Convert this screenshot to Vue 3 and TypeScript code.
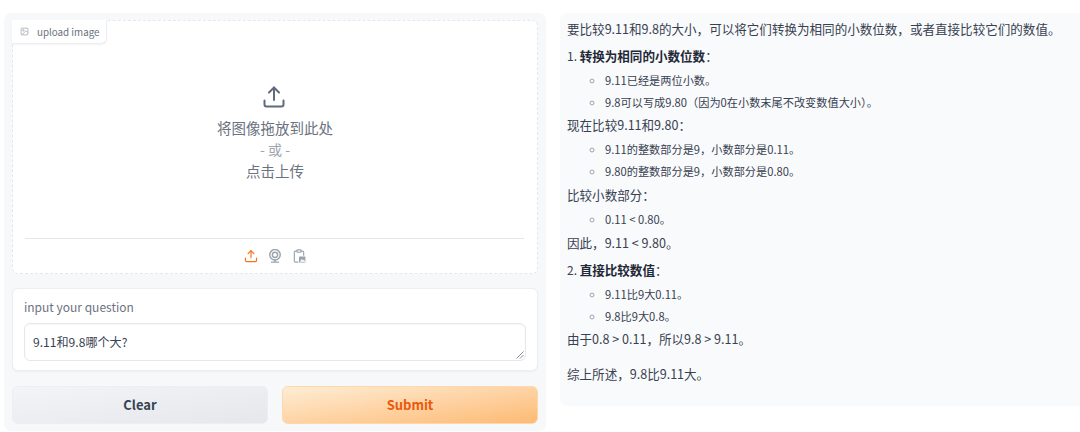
<script setup lang="ts">
const sections: { kind: string; text?: string; num?: string; strong?: string; tail?: string; items?: string[] }[] = [
  { kind: 'p', text: '要比较9.11和9.8的大小，可以将它们转换为相同的小数位数，或者直接比较它们的数值。' },
  { kind: 'h', num: '1. ', strong: '转换为相同的小数位数', tail: '：' },
  { kind: 'ul', items: ['9.11已经是两位小数。', '9.8可以写成9.80（因为0在小数末尾不改变数值大小）。'] },
  { kind: 'p', text: '现在比较9.11和9.80：' },
  { kind: 'ul', items: ['9.11的整数部分是9，小数部分是0.11。', '9.80的整数部分是9，小数部分是0.80。'] },
  { kind: 'p', text: '比较小数部分：' },
  { kind: 'ul', items: ['0.11 < 0.80。'] },
  { kind: 'p', text: '因此，9.11 < 9.80。' },
  { kind: 'h', num: '2. ', strong: '直接比较数值', tail: '：' },
  { kind: 'ul', items: ['9.11比9大0.11。', '9.8比9大0.8。'] },
  { kind: 'p', text: '由于0.8 > 0.11，所以9.8 > 9.11。' },
  { kind: 'p last', text: '综上所述，9.8比9.11大。' },
]
</script>

<template>
  <div class="page">
    <section class="left">
      <div class="upload">
        <div class="tag">
          <svg class="tag-icon" viewBox="0 0 24 24" fill="none" stroke="#9ca3af" stroke-width="2">
            <rect x="3" y="3" width="18" height="18" rx="2" />
            <circle cx="9" cy="9" r="2" />
            <path d="M21 15l-5-5L5 21" />
          </svg>
          <span>upload image</span>
        </div>
        <div class="drop">
          <svg class="up-big" viewBox="0 0 24 24" fill="none" stroke="#5f6b7d" stroke-width="2" stroke-linecap="round" stroke-linejoin="round">
            <path d="M2.500 15.500v4a2 2 0 0 0 2 2h15a2 2 0 0 0 2-2v-4" />
            <path d="M12 15V2.500" />
            <path d="M7 7.500l5-5 5 5" />
          </svg>
          <div class="drop-t">将图像拖放到此处</div>
          <div class="drop-or">- 或 -</div>
          <div class="drop-t">点击上传</div>
        </div>
        <div class="tools">
          <svg class="tool" viewBox="0 0 24 24" fill="none" stroke="#f97316" stroke-width="2" stroke-linecap="round" stroke-linejoin="round">
            <path d="M2.500 15.500v4a2 2 0 0 0 2 2h15a2 2 0 0 0 2-2v-4" />
            <path d="M12 15V3" />
            <path d="M7 8l5-5 5 5" />
          </svg>
          <svg class="tool" viewBox="0 0 24 24" fill="none" stroke="#9ca3af" stroke-width="2.500" stroke-linecap="round">
            <circle cx="12" cy="10" r="9" />
            <circle cx="12" cy="10" r="4.500" />
            <path d="M6 22.500h12M12 19v3.500" />
          </svg>
          <svg class="tool" viewBox="0 0 24 24" fill="none" stroke="#9ca3af" stroke-width="2" stroke-linejoin="round">
            <path d="M9 3.500H6a2 2 0 0 0-2 2v15a2 2 0 0 0 2 2h5" />
            <path d="M15 3.500h3a2 2 0 0 1 2 2v6" />
            <rect x="8.500" y="1.500" width="7" height="4" rx="1" />
            <rect x="12" y="13" width="11" height="10" rx="1" fill="#9ca3af" stroke="none" />
            <path d="M13.500 22l3.500-5 2 2.500 1.500-1.500 2 4z" fill="#fff" stroke="none" />
          </svg>
        </div>
      </div>

      <div class="question">
        <div class="q-label">input your question</div>
        <div class="q-box">
          <span>9.11和9.8哪个大?</span>
          <svg class="grip" viewBox="0 0 8 8" fill="none" stroke="#6b7280" stroke-width="0.800">
            <path d="M0.500 7.500L7.500 0.500M4 7.500L7.500 4" />
          </svg>
        </div>
      </div>

      <div class="buttons">
        <button class="btn clear" type="button">Clear</button>
        <button class="btn submit" type="button">Submit</button>
      </div>
    </section>

    <section class="right">
      <template v-for="(s, i) in sections" :key="i">
        <ul v-if="s.kind === 'ul'" class="list">
          <li v-for="item in s.items" :key="item">{{ item }}</li>
        </ul>
        <p v-else-if="s.kind === 'h'" class="para"><span class="num">{{ s.num }}</span><strong>{{ s.strong }}</strong>{{ s.tail }}</p>
        <p v-else :class="['para', { last: s.kind === 'p last' }]">{{ s.text }}</p>
      </template>
    </section>
  </div>
</template>

<style scoped>
.page {
  width: 1080px;
  height: 432px;
  overflow: hidden;
  background: #fff;
  display: flex;
  align-items: flex-start;
  padding: 13px 0 0 4px;
  box-sizing: border-box;
  gap: 14px;
  font-family: "Noto Sans CJK SC", "Noto Sans", sans-serif;
  color: #374151;
}
.left {
  width: 542px;
  height: 418px;
  flex: none;
  box-sizing: border-box;
  background: #f7f8fa;
  border-radius: 7px;
  padding: 7px 8px 0;
  display: flex;
  flex-direction: column;
}
.upload {
  height: 254px;
  box-sizing: border-box;
  background: #fff;
  border: 1px dashed #e5e7eb;
  border-radius: 6px;
  display: flex;
  flex-direction: column;
  position: relative;
}
.tag {
  position: absolute;
  top: -1px;
  left: -1px;
  width: 95px;
  height: 24px;
  box-sizing: border-box;
  display: flex;
  align-items: center;
  gap: 8px;
  padding-left: 8px;
  background: #fff;
  border: 1px solid #eceef1;
  border-top: none;
  border-left: none;
  border-radius: 0 0 6px 0;
  box-shadow: 0 1px 2px rgba(0, 0, 0, 0.05);
  font-size: 9.800px;
  color: #6b7280;
}
.tag-icon {
  width: 9px;
  height: 9px;
  flex: none;
}
.drop {
  flex: 1;
  display: flex;
  flex-direction: column;
  align-items: center;
  padding-top: 64px;
  font-size: 14.500px;
  line-height: 21px;
  color: #6b7280;
}
.up-big {
  width: 24px;
  height: 24px;
  margin: 0 3px 8px 0;
}
.drop-or {
  color: #9ca3af;
  font-size: 14px;
  line-height: 22px;
}
.tools {
  height: 34px;
  margin: 0 13px 0 12px;
  border-top: 1px solid #e5e7eb;
  display: flex;
  justify-content: center;
  align-items: center;
  gap: 10px;
}
.tool {
  width: 14px;
  height: 14px;
}
.question {
  margin-top: 14px;
  height: 83px;
  box-sizing: border-box;
  background: #fff;
  border: 1px solid #eceef1;
  border-radius: 6px;
  box-shadow: 0 1px 2px rgba(0, 0, 0, 0.04);
  padding: 9px 11px 0;
}
.q-label {
  font-size: 12px;
  line-height: 17px;
  color: #6b7280;
}
.q-box {
  margin-top: 8px;
  height: 38px;
  box-sizing: border-box;
  border: 1px solid #e5e7eb;
  border-radius: 6px;
  box-shadow: inset 0 1px 2px rgba(0, 0, 0, 0.04);
  padding: 0 9px 2px 8px;
  display: flex;
  align-items: center;
  font-size: 12.100px;
  color: #374151;
  position: relative;
}
.grip {
  position: absolute;
  right: 1px;
  bottom: 1px;
  width: 8px;
  height: 8px;
}
.buttons {
  margin-top: 15px;
  display: flex;
  gap: 14px;
}
.btn {
  flex: 1;
  height: 38px;
  border-radius: 6px;
  font-family: inherit;
  font-size: 13px;
  font-weight: 700;
  padding: 0 0 2px;
}
.clear {
  background: linear-gradient(to bottom right, #f3f4f6, #e5e7eb);
  border: 1px solid #eceef1;
  color: #374151;
}
.submit {
  background: linear-gradient(to bottom right, #ffedd5, #fdba74);
  border: 1px solid #fed7aa;
  color: #ea580c;
}
.right {
  width: 520px;
  height: 393px;
  flex: none;
  box-sizing: border-box;
  background: #f9fafb;
  border-radius: 7px 0 0 7px;
  padding: 6px 7px 0;
  font-size: 12.550px;
  line-height: 20px;
  color: #374151;
}
.para {
  margin: 0 0 6.600px;
  white-space: nowrap;
}
.para.last {
  margin-top: 15px;
}
.num {
  font-size: 12px;
}
strong {
  font-weight: 700;
  color: #1f2937;
}
.list {
  list-style: circle;
  margin: -2.600px 0 3.800px;
  padding: 0 0 0 38px;
  font-size: 11.200px;
  line-height: 20px;
}
.list li + li {
  margin-top: 2px;
}
.list li::marker {
  color: #9ca3af;
}
</style>
